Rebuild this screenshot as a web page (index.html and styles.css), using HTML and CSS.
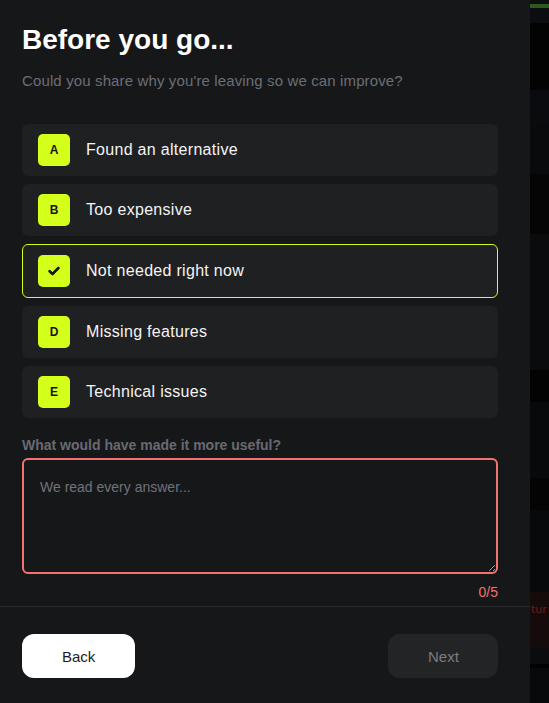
FILE: index.html
```html
<!DOCTYPE html>
<html lang="en">
<head>
<meta charset="utf-8">
<title>Before you go</title>
<link rel="stylesheet" href="styles.css">
</head>
<body>
<div class="page">
  <aside class="panel">
    <div class="panel-body">
      <h1 class="title">Before you go...</h1>
      <p class="subtitle">Could you share why you're leaving so we can improve?</p>
      <ul class="options">
        <li class="option"><span class="key">A</span><span class="label">Found an alternative</span></li>
        <li class="option"><span class="key">B</span><span class="label">Too expensive</span></li>
        <li class="option selected"><span class="key"><svg width="12" height="10" viewBox="0 0 12 10"><path d="M1.6 5.2 L4.5 8 L10.4 2" fill="none" stroke="#151618" stroke-width="2.6" stroke-linecap="round" stroke-linejoin="round"/></svg></span><span class="label">Not needed right now</span></li>
        <li class="option"><span class="key">D</span><span class="label">Missing features</span></li>
        <li class="option"><span class="key">E</span><span class="label">Technical issues</span></li>
      </ul>
      <label class="field-label" for="fb">What would have made it more useful?</label>
      <textarea id="fb" class="field" placeholder="We read every answer..."></textarea>
      <div class="counter">0/5</div>
    </div>
    <div class="footer">
      <button class="btn btn-back">Back</button>
      <button class="btn btn-next">Next</button>
    </div>
  </aside>
  <div class="backdrop">
    <div class="bg b0"></div>
    <div class="bg b-green"></div>
    <div class="bg b1"></div>
    <div class="bg b2"></div>
    <div class="bg b3"></div>
    <div class="bg b4"></div>
    <div class="bg b5"></div>
    <div class="bg b6"></div>
    <div class="bg b7"></div>
    <div class="bg b8"></div>
    <div class="bg b9"></div>
    <div class="bg b10"></div>
    <div class="bg b-red"><span class="red-text">tur</span></div>
    <div class="bg b11"></div>
    <div class="bg b12"></div>
    <div class="bg b13"></div>
  </div>
</div>
</body>
</html>
```
FILE: styles.css
```css
* { box-sizing: border-box; }
html, body { margin: 0; padding: 0; }
body {
  background: #08090b;
  font-family: "Liberation Sans", Arial, sans-serif;
  color: #fff;
}
.page {
  display: grid;
  grid-template-columns: 530px 1fr;
  height: 703px;
  overflow: hidden;
}
.panel {
  background: #161719;
  display: flex;
  flex-direction: column;
}
.panel-body {
  padding: 24px 32px 6px 22px;
}
.title {
  margin: 0;
  font-size: 28px;
  font-weight: 700;
  line-height: 32px;
  color: #ffffff;
}
.subtitle {
  margin: 16px 0 0;
  font-size: 15px;
  line-height: 18px;
  letter-spacing: 0.13px;
  color: #6b6e75;
}
.options {
  list-style: none;
  margin: 34px 0 0;
  padding: 0;
  display: flex;
  flex-direction: column;
  gap: 8px;
}
.option {
  display: flex;
  align-items: center;
  gap: 16px;
  height: 52px;
  padding: 0 16px;
  background: #1f2022;
  border-radius: 6px;
}
.option.selected {
  height: 54px;
  padding: 0 15px;
  border: 1px solid #d4ff1a;
}
.key {
  width: 32px;
  height: 32px;
  flex: none;
  display: flex;
  align-items: center;
  justify-content: center;
  background: #d4ff1a;
  border-radius: 5px;
  color: #141414;
  font-size: 12px;
  font-weight: 700;
}
.label {
  font-size: 16px;
  font-weight: 500;
  color: #f4f4f5;
  letter-spacing: 0.3px;
}
.field-label {
  display: block;
  margin-top: 19px;
  font-size: 14px;
  font-weight: 700;
  line-height: 16px;
  color: #676a71;
}
.field {
  display: block;
  width: 100%;
  height: 116px;
  margin-top: 5px;
  padding: 16px;
  background: #161719;
  border: 2px solid #f47272;
  border-radius: 6px;
  color: #e5e5e5;
  font-family: "Liberation Sans", Arial, sans-serif;
  font-size: 14px;
  line-height: 22px;
  outline: none;
}
.field::placeholder { color: #70737a; }
.counter {
  margin-top: 10px;
  text-align: right;
  font-size: 14px;
  line-height: 16px;
  color: #f47272;
}
.footer {
  border-top: 1px solid #2a2b2e;
  padding: 27px 32px 0 22px;
  display: flex;
  justify-content: space-between;
}
.btn {
  height: 44px;
  padding: 0 40px;
  border: none;
  border-radius: 12px;
  font-family: "Liberation Sans", Arial, sans-serif;
  font-size: 15px;
}
.btn-back {
  width: 113px;
  background: #ffffff;
  color: #1c1c1e;
}
.btn-next {
  width: 110px;
  background: #232426;
  color: #7b7c80;
}
.backdrop {
  display: flex;
  flex-direction: column;
  overflow: hidden;
}
.bg { flex: none; }
.b0 { height: 4px; background: #0c0e10; }
.b-green { height: 4px; background: #2a5a1d; }
.b1 { height: 15px; background: #0b0d10; }
.b2 { height: 67px; background: #030303; }
.b3 { height: 34px; background: #0a0b0e; }
.b4 { height: 50px; background: #090a0c; }
.b5 { height: 60px; background: #050505; }
.b6 { height: 136px; background: #0a0b0d; }
.b7 { height: 32px; background: #030303; }
.b8 { height: 76px; background: #08090b; }
.b9 { height: 32px; background: #040404; }
.b10 { height: 82px; background: #08090b; }
.b-red {
  height: 56px;
  background: #160b0b;
  padding: 11px 0 0 1px;
  white-space: nowrap;
}
.red-text {
  display: block;
  font-family: "DejaVu Sans", sans-serif;
  font-size: 11px;
  color: #6e1a1a;
}
.b11 { height: 16px; background: #0b0c0e; }
.b12 { height: 4px; background: #020202; }
.b13 { height: 40px; background: #08090b; }
```
